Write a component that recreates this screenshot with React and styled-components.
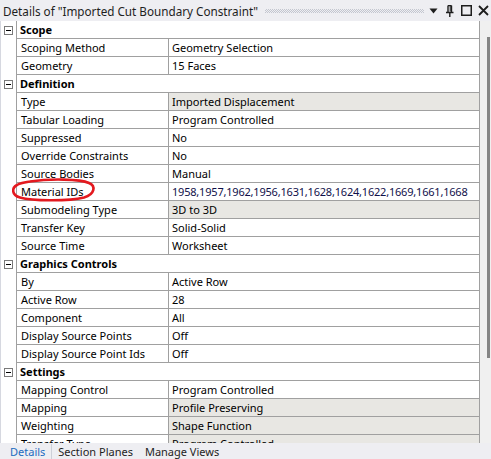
import React from 'react';
import styled, { createGlobalStyle } from 'styled-components';

const GlobalStyle = createGlobalStyle`
  html, body {
    margin: 0;
    padding: 0;
    background: #ffffff;
  }
  body {
    font-family: "Noto Sans", "Open Sans", sans-serif;
  }
`;

const Panel = styled.div`
  position: relative;
  display: flex;
  flex-direction: column;
  width: 491px;
  height: 459px;
  overflow: hidden;
  background-color: #eeeef2;
  color: #000000;
`;

const TitleBar = styled.div`
  display: flex;
  align-items: center;
  height: 21px;
  padding: 0 2px 0 3px;
  box-sizing: border-box;
  background-color: #eeeef2;
`;

const Title = styled.span`
  font-size: 11.7px;
  color: #1e1e1e;
  white-space: nowrap;
  line-height: 20px;
`;

const Grip = styled.div`
  flex: 1;
  height: 4px;
  margin: 0 5px 0 7px;
  background: repeating-conic-gradient(#c3c6cf 0 25%, transparent 0 50%) 0 0 / 2px 2px;
`;

const TitleButtons = styled.div`
  display: flex;
  align-items: center;
  gap: 4px;
  color: #1e1e1e;

  svg {
    display: block;
  }
`;

const Body = styled.div`
  display: flex;
  height: 422px;
  background-color: #ffffff;
`;

const Table = styled.div`
  display: flex;
  flex-direction: column;
  width: 480px;
  overflow: hidden;
`;

const TopRule = styled.div`
  height: 1px;
  margin-left: 16px;
  background-color: #a0a0a0;
`;

const Row = styled.div`
  display: flex;
  flex: none;
  height: 18px;
`;

const Gutter = styled.div`
  flex: none;
  display: flex;
  align-items: center;
  justify-content: center;
  width: 16px;
  box-sizing: border-box;
  border-left: 1px solid #d6d8e0;
`;

const Toggle = styled.span`
  display: block;
  position: relative;
  width: 9px;
  height: 9px;
  box-sizing: border-box;
  border: 1px solid #7a7a7a;
  background: #ffffff;

  &::after {
    content: '';
    position: absolute;
    left: 1px;
    right: 1px;
    top: 3px;
    height: 1px;
    background: #000000;
  }
`;

const Line = styled.div`
  flex: 1;
  display: flex;
  border-left: 1px solid #a0a0a0;
  border-right: 1px solid #a0a0a0;
  border-bottom: 1px solid #a0a0a0;
  font-size: 11px;
  line-height: 17px;
  white-space: nowrap;
`;

const GroupName = styled.div`
  padding-left: 3px;
  font-weight: 700;
`;

const Label = styled.div`
  flex: none;
  width: 152px;
  box-sizing: border-box;
  padding-left: 4px;
  border-right: 1px solid #a0a0a0;
  overflow: hidden;
`;

const Value = styled.div`
  flex: 1;
  padding-left: 3px;
  overflow: hidden;
  background-color: ${({ $shaded }) => ($shaded ? '#e8e7e3' : '#ffffff')};
  color: ${({ $ink }) => $ink || '#000000'};
  letter-spacing: ${({ $tight }) => ($tight ? '-0.2px' : 'normal')};
`;

const Scroll = styled.div`
  flex: 1;
  display: flex;
  justify-content: flex-end;
  padding: 16px 1px 0 0;
  background-color: #f0f0f0;
`;

const Thumb = styled.div`
  width: 3px;
  height: 321px;
  background-color: #858585;
`;

const TabBar = styled.div`
  position: relative;
  z-index: 1;
  display: flex;
  align-items: center;
  height: 16px;
  padding-left: 3px;
  background-color: #eeeef2;
  font-size: 11px;
`;

const Tab = styled.div`
  padding: 0 6px 0 ${({ $first }) => ($first ? '7px' : '6px')};
  line-height: 15px;
  color: ${({ $active }) => ($active ? '#1c6cc0' : '#1e1e1e')};
  border-right: ${({ $divider }) => ($divider ? '1px solid #cdd0d8' : 'none')};
`;

const Annotation = styled.svg`
  position: absolute;
  left: 10px;
  top: 177px;
  pointer-events: none;
`;

const groups = [
  {
    name: 'Scope',
    rows: [
      ['Scoping Method', 'Geometry Selection'],
      ['Geometry', '15 Faces'],
    ],
  },
  {
    name: 'Definition',
    rows: [
      ['Type', 'Imported Displacement', true],
      ['Tabular Loading', 'Program Controlled'],
      ['Suppressed', 'No'],
      ['Override Constraints', 'No'],
      ['Source Bodies', 'Manual'],
      ['Material IDs', '1958,1957,1962,1956,1631,1628,1624,1622,1669,1661,1668', false, '#10104a', true],
      ['Submodeling Type', '3D to 3D', true],
      ['Transfer Key', 'Solid-Solid'],
      ['Source Time', 'Worksheet'],
    ],
  },
  {
    name: 'Graphics Controls',
    rows: [
      ['By', 'Active Row'],
      ['Active Row', '28'],
      ['Component', 'All'],
      ['Display Source Points', 'Off'],
      ['Display Source Point Ids', 'Off'],
    ],
  },
  {
    name: 'Settings',
    rows: [
      ['Mapping Control', 'Program Controlled'],
      ['Mapping', 'Profile Preserving', true],
      ['Weighting', 'Shape Function', true],
      ['Transfer Type', 'Program Controlled', true],
    ],
  },
];

function TitleIcons() {
  return (
    <TitleButtons>
      <svg width="9" height="6" viewBox="0 0 9 6">
        <path d="M0.5 0.5 H8.5 L4.5 5.5 Z" fill="#1e1e1e" />
      </svg>
      <svg width="10" height="12" viewBox="0 0 10 12" style={{ marginLeft: 3 }}>
        <path d="M3 0.5 V7 M6.5 0.5 V7 M3 0.5 H6.5 M1 7.5 H8.5 M4.8 7.5 V12" stroke="#1e1e1e" strokeWidth="1.4" fill="none" />
        <path d="M5.2 1 V6.5" stroke="#1e1e1e" strokeWidth="1" />
      </svg>
      <svg width="11" height="11" viewBox="0 0 11 11" style={{ marginLeft: 2 }}>
        <rect x="0.75" y="0.75" width="9.5" height="9.5" fill="none" stroke="#1e1e1e" strokeWidth="1.5" />
      </svg>
      <svg width="11" height="11" viewBox="0 0 11 11" style={{ marginLeft: 2 }}>
        <path d="M1 1 L10 10 M10 1 L1 10" stroke="#1e1e1e" strokeWidth="1.8" />
      </svg>
    </TitleButtons>
  );
}

export default function App() {
  return (
    <Panel>
      <GlobalStyle />
      <TitleBar>
        <Title>Details of "Imported Cut Boundary Constraint"</Title>
        <Grip />
        <TitleIcons />
      </TitleBar>
      <Body>
        <Table>
          <TopRule />
          {groups.map((group) => (
            <React.Fragment key={group.name}>
              <Row>
                <Gutter>
                  <Toggle />
                </Gutter>
                <Line>
                  <GroupName>{group.name}</GroupName>
                </Line>
              </Row>
              {group.rows.map(([label, value, shaded, ink, tight]) => (
                <Row key={label}>
                  <Gutter />
                  <Line>
                    <Label>{label}</Label>
                    <Value $shaded={shaded} $ink={ink} $tight={tight}>{value}</Value>
                  </Line>
                </Row>
              ))}
            </React.Fragment>
          ))}
        </Table>
        <Scroll>
          <Thumb />
        </Scroll>
      </Body>
      <TabBar>
        <Tab $first $active $divider>Details</Tab>
        <Tab>Section Planes</Tab>
        <Tab>Manage Views</Tab>
      </TabBar>
      <Annotation width="88" height="26" viewBox="0 0 88 26">
        <path
          d="M20 4.5 C40 1.5 70 2 79 6 C86 9 85 17 74 20.5 C58 24.5 22 24 10 20.5 C1.5 18 1.5 11 7 8 C10 6.2 14 5.3 20 4.5"
          fill="none"
          stroke="#e3191f"
          strokeWidth="2.6"
          strokeLinecap="round"
        />
      </Annotation>
    </Panel>
  );
}
